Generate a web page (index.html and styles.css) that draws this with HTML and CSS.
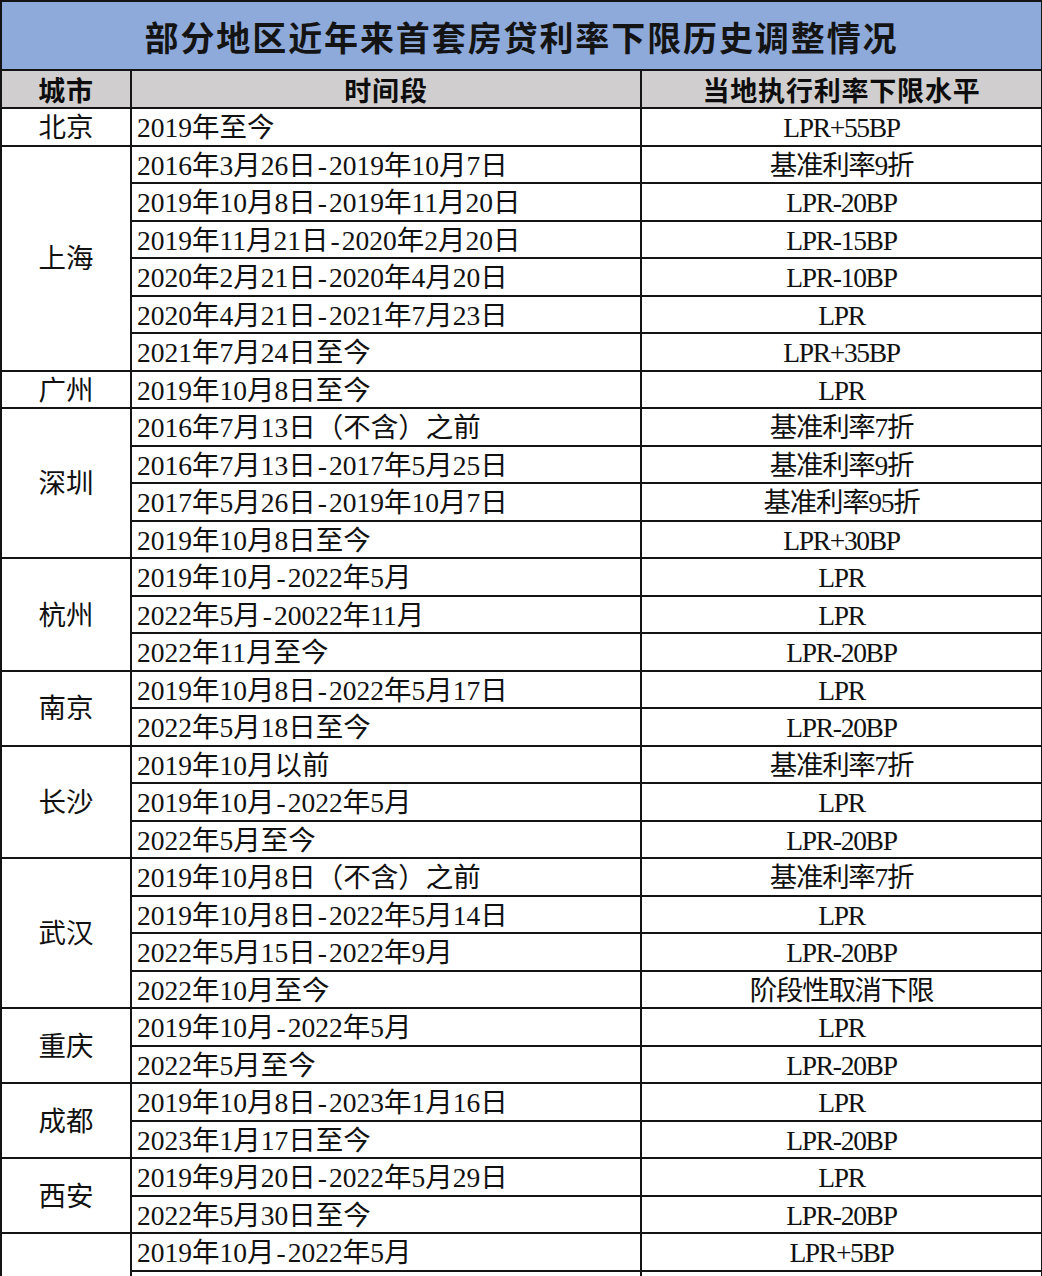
FILE: index.html
```html
<!DOCTYPE html>
<html lang="zh-CN">
<head>
<meta charset="utf-8">
<title>部分地区近年来首套房贷利率下限历史调整情况</title>
<link rel="stylesheet" href="styles.css">
</head>
<body>
<table class="rates">
  <colgroup>
    <col class="c-city">
    <col class="c-period">
    <col class="c-rate">
  </colgroup>
  <thead>
    <tr class="title-row"><th colspan="3" class="title">部分地区近年来首套房贷利率下限历史调整情况</th></tr>
    <tr class="head-row"><th>城市</th><th>时间段</th><th>当地执行利率下限水平</th></tr>
  </thead>
  <tbody>
    <tr><td class="city">北京</td><td class="period">2019年至今</td><td class="rate">LPR+55BP</td></tr>

    <tr><td class="city" rowspan="6">上海</td><td class="period">2016年3月26日<span class="dash">-</span>2019年10月7日</td><td class="rate">基准利率9折</td></tr>
    <tr><td class="period">2019年10月8日<span class="dash">-</span>2019年11月20日</td><td class="rate">LPR-20BP</td></tr>
    <tr><td class="period">2019年11月21日<span class="dash">-</span>2020年2月20日</td><td class="rate">LPR-15BP</td></tr>
    <tr><td class="period">2020年2月21日<span class="dash">-</span>2020年4月20日</td><td class="rate">LPR-10BP</td></tr>
    <tr><td class="period">2020年4月21日<span class="dash">-</span>2021年7月23日</td><td class="rate">LPR</td></tr>
    <tr><td class="period">2021年7月24日至今</td><td class="rate">LPR+35BP</td></tr>

    <tr><td class="city">广州</td><td class="period">2019年10月8日至今</td><td class="rate">LPR</td></tr>

    <tr><td class="city" rowspan="4">深圳</td><td class="period">2016年7月13日（不含）之前</td><td class="rate">基准利率7折</td></tr>
    <tr><td class="period">2016年7月13日<span class="dash">-</span>2017年5月25日</td><td class="rate">基准利率9折</td></tr>
    <tr><td class="period">2017年5月26日<span class="dash">-</span>2019年10月7日</td><td class="rate">基准利率95折</td></tr>
    <tr><td class="period">2019年10月8日至今</td><td class="rate">LPR+30BP</td></tr>

    <tr><td class="city" rowspan="3">杭州</td><td class="period">2019年10月<span class="dash">-</span>2022年5月</td><td class="rate">LPR</td></tr>
    <tr><td class="period">2022年5月<span class="dash">-</span>20022年11月</td><td class="rate">LPR</td></tr>
    <tr><td class="period">2022年11月至今</td><td class="rate">LPR-20BP</td></tr>

    <tr><td class="city" rowspan="2">南京</td><td class="period">2019年10月8日<span class="dash">-</span>2022年5月17日</td><td class="rate">LPR</td></tr>
    <tr><td class="period">2022年5月18日至今</td><td class="rate">LPR-20BP</td></tr>

    <tr><td class="city" rowspan="3">长沙</td><td class="period">2019年10月以前</td><td class="rate">基准利率7折</td></tr>
    <tr><td class="period">2019年10月<span class="dash">-</span>2022年5月</td><td class="rate">LPR</td></tr>
    <tr><td class="period">2022年5月至今</td><td class="rate">LPR-20BP</td></tr>

    <tr><td class="city" rowspan="4">武汉</td><td class="period">2019年10月8日（不含）之前</td><td class="rate">基准利率7折</td></tr>
    <tr><td class="period">2019年10月8日<span class="dash">-</span>2022年5月14日</td><td class="rate">LPR</td></tr>
    <tr><td class="period">2022年5月15日<span class="dash">-</span>2022年9月</td><td class="rate">LPR-20BP</td></tr>
    <tr><td class="period">2022年10月至今</td><td class="rate">阶段性取消下限</td></tr>

    <tr><td class="city" rowspan="2">重庆</td><td class="period">2019年10月<span class="dash">-</span>2022年5月</td><td class="rate">LPR</td></tr>
    <tr><td class="period">2022年5月至今</td><td class="rate">LPR-20BP</td></tr>

    <tr><td class="city" rowspan="2">成都</td><td class="period">2019年10月8日<span class="dash">-</span>2023年1月16日</td><td class="rate">LPR</td></tr>
    <tr><td class="period">2023年1月17日至今</td><td class="rate">LPR-20BP</td></tr>

    <tr><td class="city" rowspan="2">西安</td><td class="period">2019年9月20日<span class="dash">-</span>2022年5月29日</td><td class="rate">LPR</td></tr>
    <tr><td class="period">2022年5月30日至今</td><td class="rate">LPR-20BP</td></tr>

    <tr><td class="city" rowspan="3">郑州</td><td class="period">2019年10月<span class="dash">-</span>2022年5月</td><td class="rate">LPR+5BP</td></tr>
    <tr><td class="period">2022年5月至今</td><td class="rate">LPR-20BP</td></tr>
    <tr><td class="period">2022年9月至今</td><td class="rate">LPR-20BP</td></tr>
  </tbody>
</table>
</body>
</html>
```

FILE: styles.css
```css
html, body {
  margin: 0;
  padding: 0;
  background: #ffffff;
}

body {
  font-family: "Liberation Serif", "Noto Sans CJK SC", serif;
  color: #111111;
}

.rates {
  width: 1041px;
  border-collapse: collapse;
  table-layout: fixed;
  border: 2px solid #141414;
}

.c-city { width: 130px; }
.c-period { width: 510px; }
.c-rate { width: 401px; }

.rates th,
.rates td {
  border: 2px solid #141414;
  padding: 0;
  vertical-align: middle;
  line-height: 1;
  white-space: nowrap;
  overflow: hidden;
}

.rates .title-row { height: 69px; }

.rates .title {
  background: #8eaadb;
  font-family: "Noto Sans CJK SC", sans-serif;
  font-weight: 700;
  font-size: 34px;
  letter-spacing: 1.9px;
  color: #141414;
  text-align: center;
  padding-top: 2px;
}

.rates .head-row { height: 38px; }

.rates .head-row th {
  background: #d0cece;
  font-family: "Noto Sans CJK SC", sans-serif;
  font-weight: 700;
  font-size: 27px;
  letter-spacing: 0.8px;
  color: #0d0d0d;
  text-align: center;
}

.rates tbody tr { height: 37.5px; }

.rates td {
  font-size: 27.5px;
  font-weight: 400;
  padding-top: 2px;
}

.rates .city {
  text-align: center;
}

.rates .period {
  text-align: left;
  padding-left: 5px;
}

.rates .dash {
  padding: 0 2px;
}

.rates .rate {
  text-align: center;
  letter-spacing: -1.3px;
}
```
